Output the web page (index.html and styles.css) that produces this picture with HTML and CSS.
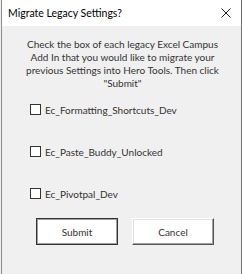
FILE: index.html
```html
<!DOCTYPE html>
<html lang="en">
<head>
    <meta charset="UTF-8">
    <title>Migrate Legacy Settings?</title>
    <link rel="stylesheet" href="styles.css">
</head>
<body>
    <div class="window">
        <div class="titlebar">
            <span class="title">Migrate Legacy Settings?</span>
            <svg class="close" width="10" height="10" viewBox="0 0 10 10">
                <path d="M0.5 0.5 L9.5 9.5 M9.5 0.5 L0.5 9.5" stroke="#222" stroke-width="1" fill="none"/>
            </svg>
        </div>

        <div class="body">
            <p class="intro">Check the box of each legacy Excel Campus<br>Add In that you would like to migrate your<br>previous Settings into Hero Tools. Then click<br>"Submit"</p>

            <div class="options">
                <label class="option"><span class="box"></span>Ec_Formatting_Shortcuts_Dev</label>
                <label class="option"><span class="box"></span>Ec_Paste_Buddy_Unlocked</label>
                <label class="option"><span class="box"></span>Ec_Pivotpal_Dev</label>
            </div>

            <div class="buttons">
                <div class="btn default"><span>Submit</span></div>
                <div class="btn"><span>Cancel</span></div>
            </div>
        </div>
    </div>
</body>
</html>
```

FILE: styles.css
```css
html, body {
    padding: 0;
    margin: 0;
}

body {
    background: #f0f0f0;
    font-family: "Lato", sans-serif;
    color: #222;
}

.window {
    height: 274px;
    box-sizing: border-box;
    margin-left: 1px;
    border-left: 1px solid #8a8a8a;
    border-right: 1px solid #6e6e6e;
    background: #f0f0f0;
}

.titlebar {
    height: 26px;
    background: #fff;
    display: flex;
    align-items: center;
    justify-content: space-between;
    padding: 0 10px 0 6px;
}

.title {
    font-size: 10.5px;
    color: #000;
}

.close {
    display: block;
}

.body {
    padding: 12px 18px 0 20px;
}

.intro {
    margin: 0;
    text-align: center;
    font-size: 10px;
    line-height: 13px;
    color: #333;
    white-space: nowrap;
}

.options {
    display: flex;
    flex-direction: column;
    gap: 29px;
    padding: 13px 0 0 8px;
}

.option {
    display: flex;
    align-items: center;
    gap: 4px;
    font-size: 10px;
    height: 13px;
    color: #333;
}

.box {
    width: 9px;
    height: 9px;
    border: 1px solid #333;
    background: #fff;
}

.buttons {
    display: flex;
    gap: 14px;
    padding: 18px 0 0 14px;
}

.btn {
    width: 82px;
    height: 27px;
    box-sizing: border-box;
    background: #fff;
    border: 1px solid;
    border-color: #fff #555 #555 #fff;
    box-shadow: inset -1px -1px 0 #a0a0a0, inset 1px 1px 0 #e3e3e3;
    display: flex;
    align-items: center;
    justify-content: center;
    font-size: 10px;
    color: #333;
}

.btn.default {
    border-color: #333;
    padding: 1px;
    box-shadow: inset 1px 1px 0 #a0a0a0, inset -1px -1px 0 #a0a0a0;
}
```
